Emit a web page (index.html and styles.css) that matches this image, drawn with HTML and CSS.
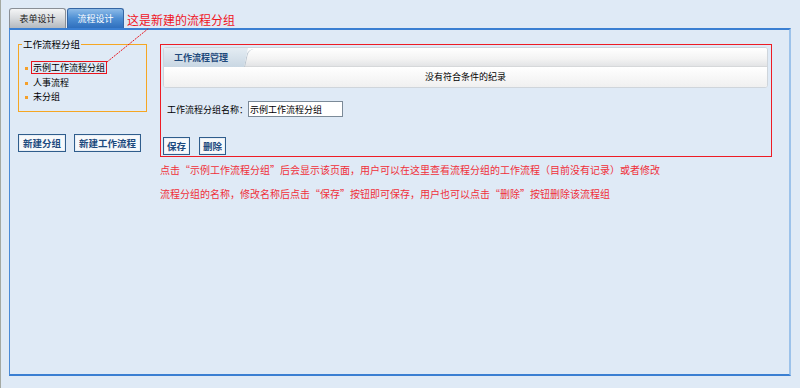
FILE: index.html
```html
<!DOCTYPE html>
<html>
<head>
<meta charset="utf-8">
<title>流程设计</title>
<link rel="stylesheet" href="styles.css">
</head>
<body>
<div class="page">
  <div class="tabbar">
    <div class="tab">表单设计</div>
    <div class="tab on">流程设计</div>
    <span class="note-title">这是新建的流程分组</span>
  </div>
  <div class="panel">
    <div class="side">
      <fieldset class="group">
        <legend>工作流程分组</legend>
        <ul class="tree">
          <li><span class="mark">示例工作流程分组</span></li>
          <li>人事流程</li>
          <li>未分组</li>
        </ul>
      </fieldset>
      <div class="side-btns">
        <button class="btn">新建分组</button>
        <button class="btn">新建工作流程</button>
      </div>
    </div>
    <div class="main">
      <div class="redbox">
        <div class="grid">
          <div class="grid-head"><span class="grid-tab">工作流程管理</span></div>
          <div class="grid-row">没有符合条件的纪录</div>
        </div>
        <div class="form-row">
          <label>工作流程分组名称：</label><input class="txt" type="text" value="示例工作流程分组">
        </div>
        <div class="main-btns">
          <button class="btn">保存</button>
          <button class="btn">删除</button>
        </div>
      </div>
      <p class="note">点击“示例工作流程分组”后会显示该页面，用户可以在这里查看流程分组的工作流程（目前没有记录）或者修改流程分组的名称，修改名称后点击“保存”按钮即可保存，用户也可以点击“删除”按钮删除该流程组</p>
    </div>
  </div>
</div>
<svg class="arrow" width="800" height="388"><line x1="107" y1="62" x2="149" y2="28" stroke="#e8141e" stroke-width="1" stroke-dasharray="2 1"/></svg>
</body>
</html>
```
FILE: styles.css
```css
* {margin:0;padding:0;box-sizing:border-box;}
html,body {height:100%;}
body {background:#dfeaf6;border-left:1px solid #a4a9a2;font-family:"Noto Sans CJK SC","Liberation Sans",sans-serif;font-size:9px;color:#000;position:relative;overflow:hidden;}
.page {padding:8px 0 0 8px;}

.tabbar {display:flex;align-items:flex-end;height:20px;}
.tab {width:57px;height:20px;margin-right:1px;border:1px solid #8a8f96;border-bottom:0;border-radius:3px 3px 0 0;background:linear-gradient(#f4f5f6,#d7dadd 50%,#b4b9bf);color:#222;font-size:9px;line-height:19px;text-align:center;}
.tab.on {background:linear-gradient(#8dbbe8,#4d8ed3 50%,#2f6fbd);border-color:#3566a3;color:#fff;}
.note-title {color:#f0141e;font-size:12px;line-height:17px;margin-left:2px;align-self:flex-start;margin-top:3px;}

.panel {display:flex;width:782px;height:348px;border-top:2px solid #3a7fd2;border-left:1px solid #4a8ad6;border-right:2px solid #9cc2ea;border-bottom:2px solid #3a7fd2;padding:14px 0 0 8px;}
.side {width:129px;margin-right:13px;}
.group {border:1px solid #f5a623;height:73px;margin-top:-5px;padding:0 0 0 5px;}
.group legend {padding:0 1px;margin-left:-2px;font-size:9.5px;line-height:10px;}
.tree {list-style:none;margin-top:12px;}
.tree li {position:relative;padding-left:9px;height:14.5px;line-height:14px;}
.tree li:before {content:"";position:absolute;left:1px;top:6px;width:3px;height:3px;background:#f5a02a;}
.mark {display:inline-block;border:1px solid #e8141e;line-height:11px;padding:0 1px;margin-left:-2px;}
.side-btns {display:flex;gap:8px;margin-top:22px;}

.btn {height:18px;padding:0 4px;border:1px solid #2f5d8c;box-shadow:inset 0 0 0 1px #e8eef5;background:#f7f9fb;color:#1c4a7e;font-family:inherit;font-size:9.5px;font-weight:bold;line-height:15px;}

.main {width:612px;}
.redbox {border:1px solid #ee1c25;height:113px;padding:2px 3px 0 2px;}
.grid {border:1px solid #cfd5db;border-radius:3px;background:#fff;overflow:hidden;}
.grid-head {height:19px;background:linear-gradient(#ffffff,#f3f3f3 60%,#e3e4e6);border-bottom:1px solid #d6d8da;position:relative;}
.grid-tab {display:inline-block;height:19px;width:92px;padding-left:10px;line-height:19px;font-weight:bold;color:#1f4a7c;background:linear-gradient(#e4ecf3,#c9d7e3);clip-path:polygon(0 0,84px 0,80px 100%,0 100%);position:relative;}
.grid-head:after {content:"";position:absolute;left:80px;top:1px;width:14px;height:18px;border-left:1px solid #b9c4cf;transform:skewX(-12deg);transform-origin:bottom left;border-radius:6px 0 0 0;}
.grid-row {height:20px;line-height:19px;text-align:center;background:linear-gradient(#ffffff,#f0f0f0);}

.form-row {display:flex;align-items:center;margin:13px 0 0 4px;height:16px;}
.form-row label {width:81px;}
.txt {width:95px;height:16px;border:1px solid #7b8a98;background:#fff;font-family:inherit;font-size:9px;padding:0 1px;color:#000;}
.main-btns {display:flex;gap:9px;margin-top:20px;}
.main-btns .btn {width:27px;padding:0;}

.note {width:502px;color:#f0303a;font-size:10px;line-height:24px;margin-top:1px;}
.arrow {position:absolute;top:0;left:-1px;pointer-events:none;}
```
